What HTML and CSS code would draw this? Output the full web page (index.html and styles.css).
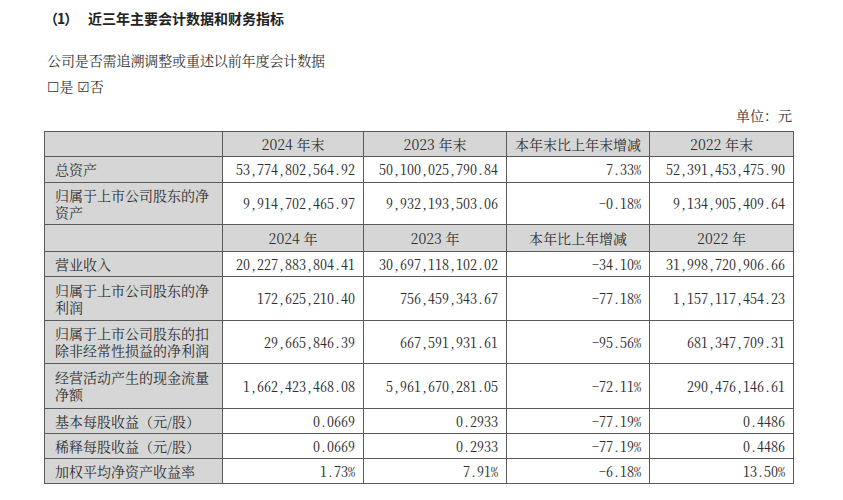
FILE: index.html
```html
<!DOCTYPE html>
<html lang="zh">
<head>
<meta charset="utf-8">
<link rel="stylesheet" href="styles.css">
</head>
<body>
<div class="page">
  <h2 class="title"><span class="num">（1）</span>近三年主要会计数据和财务指标</h2>
  <p class="q">公司是否需追溯调整或重述以前年度会计数据</p>
  <p class="opts"><span class="box">☐</span>是 <span class="box">☑</span>否</p>
  <p class="unit">单位：元</p>
  <table class="fin">
    <colgroup>
      <col class="c1"><col class="c2"><col class="c3"><col class="c4"><col class="c5">
    </colgroup>
    <tr class="h r25"><td class="lab"></td><td>2024 年末</td><td>2023 年末</td><td>本年末比上年末增减</td><td>2022 年末</td></tr>
    <tr class="r26"><td class="lab">总资产</td><td class="n">53,774,802,564.92</td><td class="n">50,100,025,790.84</td><td class="n">7.33%</td><td class="n">52,391,453,475.90</td></tr>
    <tr class="r42"><td class="lab">归属于上市公司股东的净资产</td><td class="n">9,914,702,465.97</td><td class="n">9,932,193,503.06</td><td class="n">-0.18%</td><td class="n">9,134,905,409.64</td></tr>
    <tr class="h r27"><td class="lab"></td><td>2024 年</td><td>2023 年</td><td>本年比上年增减</td><td>2022 年</td></tr>
    <tr class="r25"><td class="lab">营业收入</td><td class="n">20,227,883,804.41</td><td class="n">30,697,118,102.02</td><td class="n">-34.10%</td><td class="n">31,998,720,906.66</td></tr>
    <tr class="r44"><td class="lab">归属于上市公司股东的净利润</td><td class="n">172,625,210.40</td><td class="n">756,459,343.67</td><td class="n">-77.18%</td><td class="n">1,157,117,454.23</td></tr>
    <tr class="r43"><td class="lab">归属于上市公司股东的扣除非经常性损益的净利润</td><td class="n">29,665,846.39</td><td class="n">667,591,931.61</td><td class="n">-95.56%</td><td class="n">681,347,709.31</td></tr>
    <tr class="r45"><td class="lab">经营活动产生的现金流量净额</td><td class="n">1,662,423,468.08</td><td class="n">5,961,670,281.05</td><td class="n">-72.11%</td><td class="n">290,476,146.61</td></tr>
    <tr class="r25"><td class="lab">基本每股收益（元/股）</td><td class="n">0.0669</td><td class="n">0.2933</td><td class="n">-77.19%</td><td class="n">0.4486</td></tr>
    <tr class="r25"><td class="lab">稀释每股收益（元/股）</td><td class="n">0.0669</td><td class="n">0.2933</td><td class="n">-77.19%</td><td class="n">0.4486</td></tr>
    <tr class="r25"><td class="lab">加权平均净资产收益率</td><td class="n">1.73%</td><td class="n">7.91%</td><td class="n">-6.18%</td><td class="n">13.50%</td></tr>
  </table>
</div>
</body>
</html>
```

FILE: styles.css
```css
html, body {
  margin: 0;
  padding: 0;
  background: #ffffff;
}
body {
  font-family: "Noto Serif CJK SC", "Noto Sans CJK SC", "Noto Sans", sans-serif;
  color: #2a2a2a;
}
.page {
  width: 843px;
  height: 500px;
  overflow: hidden;
  padding: 0 0 0 44px;
  box-sizing: border-box;
}
.title {
  margin: 0;
  padding-top: 8px;
  height: 24px;
  font-family: "Noto Sans CJK SC", sans-serif;
  font-size: 14px;
  line-height: 20px;
  font-weight: 700;
  color: #222;
}
.title .num {
  display: inline-block;
  width: 44px;
  letter-spacing: -1px;
}
.q {
  margin: 18px 0 0 3px;
  font-size: 14px;
  line-height: 20px;
  letter-spacing: -0.1px;
  color: #333;
}
.opts {
  margin: 6px 0 0 3px;
  font-size: 14px;
  line-height: 20px;
  color: #333;
}
.box {
  font-family: "DejaVu Sans", sans-serif;
  font-size: 14px;
}
.unit {
  margin: 8px 0 0 0;
  width: 748px;
  text-align: right;
  font-size: 14px;
  line-height: 20px;
  color: #333;
}
.fin {
  margin-top: 6px;
  border-collapse: collapse;
  table-layout: fixed;
  width: 749px;
  font-size: 14px;
}
.c1 { width: 178px; }
.c2 { width: 141px; }
.c3 { width: 143px; }
.c4 { width: 143px; }
.c5 { width: 144px; }
.fin td {
  border: 1px solid #5a5a5a;
  padding: 0 8px;
  line-height: 17px;
  text-align: center;
  color: #2e2e2e;
  background: #fff;
  white-space: normal;
}
.fin td.lab {
  text-align: left;
  padding-left: 10px;
  padding-right: 12px;
  background: #d6d6d6;
}
.fin tr.h td {
  background: #d6d6d6;
}
.fin td.n {
  text-align: right;
  font-feature-settings: "hwid" 1;
  font-size: 14px;
  padding-right: 8px;
  white-space: nowrap;
}
.r25 { height: 25px; }
.r26 { height: 26px; }
.r27 { height: 27px; }
.r42 { height: 42px; }
.r43 { height: 43px; }
.r44 { height: 44px; }
.r45 { height: 45px; }
```
